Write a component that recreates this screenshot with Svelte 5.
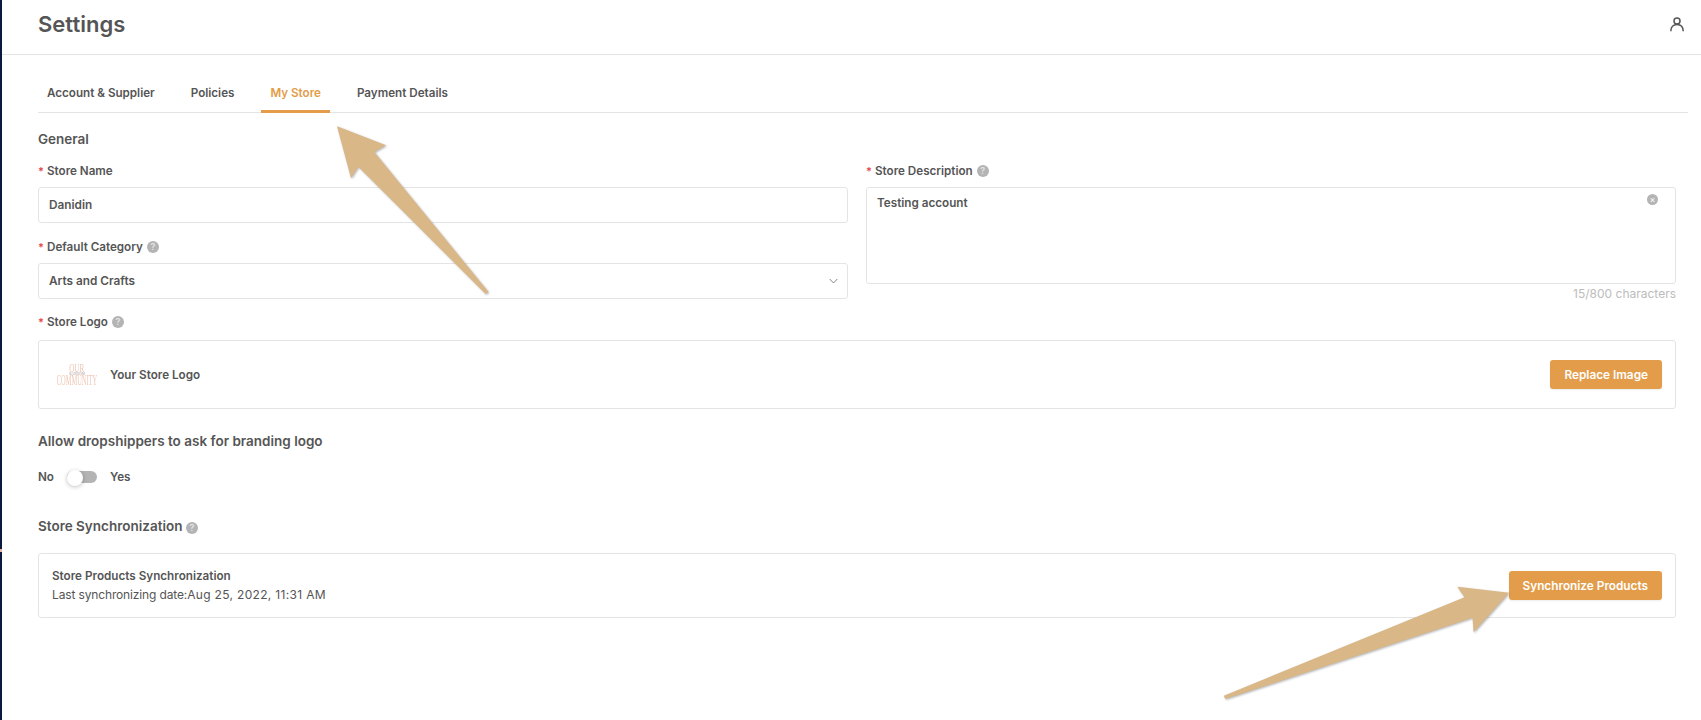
<script>
  const tabs = ['Account & Supplier', 'Policies', 'My Store', 'Payment Details'];
  const active = 'My Store';
</script>

<div class="page">
  <aside class="rail"><span class="rail-mark"></span></aside>
  <main class="main">
    <header class="top">
      <h1>Settings</h1>
      <svg class="user" viewBox="0 0 14 15" aria-hidden="true">
        <circle cx="7" cy="4" r="3" />
        <path d="M.8 14.3c0-4.2 2.5-6.8 6.2-6.8s6.2 2.6 6.2 6.8" />
      </svg>
    </header>

    <section class="content">
      <nav class="tabs">
        {#each tabs as tab}
          <span class="tab" class:active={tab === active}>{tab}</span>
        {/each}
      </nav>

      <div class="body">
        <h2 class="general">General</h2>

        <div class="grid">
          <div class="col">
            <label class="label"><i>*</i>Store Name</label>
            <div class="field">Danidin</div>
            <label class="label second"><i>*</i>Default Category <span class="help">?</span></label>
            <div class="field select">
              Arts and Crafts
              <svg viewBox="0 0 10 6" aria-hidden="true"><path d="M.8.8 5 5.2 9.2.8" /></svg>
            </div>
          </div>
          <div class="col">
            <label class="label"><i>*</i>Store Description <span class="help">?</span></label>
            <div class="area">
              Testing account
              <span class="clear">×</span>
            </div>
            <div class="count">15/800 characters</div>
          </div>
        </div>

        <label class="label logo-label"><i>*</i>Store Logo <span class="help">?</span></label>
        <div class="box logo-box">
          <div class="logo-left">
            <div class="logo">
              <span class="l1">OUR</span>
              <span class="l2">RANDOM</span>
              <span class="l3">COMMUNITY</span>
            </div>
            <span class="logo-text">Your Store Logo</span>
          </div>
          <button class="btn">Replace Image</button>
        </div>

        <h2 class="allow">Allow dropshippers to ask for branding logo</h2>
        <div class="switch-row">
          <span>No</span>
          <span class="switch"><span class="thumb"></span></span>
          <span>Yes</span>
        </div>

        <h2 class="sync-title">Store Synchronization <span class="help">?</span></h2>
        <div class="box sync-box">
          <div>
            <div class="sync-name">Store Products Synchronization</div>
            <div class="sync-date">Last synchronizing date:<span class="sync-value">Aug 25, 2022, 11:31 AM</span></div>
          </div>
          <button class="btn">Synchronize Products</button>
        </div>
      </div>
    </section>
  </main>

  <svg class="arrows" viewBox="0 0 1701 720" aria-hidden="true">
    <polygon points="337,126.3 386,145.3 374.3,152 488.3,291.7 485.7,294 358.3,166.7 351,178.3" />
    <polygon points="1509,592.7 1457.3,586.7 1464.5,597.3 1223.8,695.7 1225.3,699 1472.5,617.7 1473.6,632.3" />
  </svg>
</div>

<style>
  :global(body) {
    margin: 0;
    background: #fff;
    font-family: Inter, "Liberation Sans", sans-serif;
    color: #555;
  }
  .page {
    position: relative;
    display: flex;
    height: 720px;
    overflow: hidden;
  }
  .rail {
    position: relative;
    flex: 0 0 2px;
    background: #0b1a3c;
  }
  .rail-mark {
    position: absolute;
    top: 549px;
    left: 0;
    width: 2px;
    height: 3px;
    background: #e8b4a8;
  }
  .main { flex: 1; min-width: 0; }
  .top {
    display: flex;
    align-items: center;
    justify-content: space-between;
    box-sizing: border-box;
    height: 55px;
    padding: 0 17px 6px 36px;
    border-bottom: 1px solid #e4e4e4;
  }
  h1 {
    margin: 0;
    font-size: 22px;
    font-weight: 600;
    line-height: 26px;
    color: #555;
  }
  .user {
    width: 14px;
    height: 15px;
    fill: none;
    stroke: #555;
    stroke-width: 1.5;
  }
  .content { padding: 19px 13px 0 36px; }
  .tabs {
    display: flex;
    gap: 18px;
    height: 39px;
    box-sizing: border-box;
    border-bottom: 1px solid #e4e4e4;
  }
  .tab {
    box-sizing: border-box;
    height: 39px;
    padding: 10px 9px 0;
    font-size: 11.65px;
    font-weight: 600;
    line-height: 18px;
    color: #555;
  }
  .tab.active {
    color: #e39d4a;
    border-bottom: 3px solid #e39d4a;
  }
  .body { padding-right: 12px; }
  h2 {
    margin: 0;
    font-size: 13.5px;
    font-weight: 600;
    line-height: 20px;
    color: #555;
  }
  .general { margin-top: 16px; }
  .grid {
    display: grid;
    grid-template-columns: 810px 810px;
    gap: 18px;
    margin-top: 13px;
  }
  .label {
    display: flex;
    align-items: center;
    gap: 4px;
    height: 18px;
    font-size: 11.65px;
    font-weight: 600;
    line-height: 18px;
    color: #555;
  }
  .label i {
    font-style: normal;
    color: #e5484d;
    width: 5px;
    font-size: 11px;
  }
  .second { margin-top: 15px; }
  .field {
    display: flex;
    align-items: center;
    box-sizing: border-box;
    height: 36px;
    margin-top: 7px;
    padding: 0 10px;
    border: 1px solid #e4e4e4;
    border-radius: 3px;
    font-size: 11.8px;
    font-weight: 600;
  }
  .select { justify-content: space-between; padding-right: 9px; }
  .select svg { width: 9px; height: 6px; fill: none; stroke: #777; stroke-width: 1; }
  .area {
    position: relative;
    box-sizing: border-box;
    height: 97px;
    margin-top: 7px;
    padding: 6px 10px;
    border: 1px solid #e4e4e4;
    border-radius: 3px;
    font-size: 11.7px;
    font-weight: 600;
    line-height: 18px;
  }
  .clear {
    position: absolute;
    top: 6px;
    right: 17px;
    width: 11px;
    height: 11px;
    border-radius: 50%;
    background: #b4b4b4;
    color: #fff;
    font-size: 9px;
    font-weight: 400;
    line-height: 11px;
    text-align: center;
  }
  .count {
    margin-top: 1px;
    text-align: right;
    font-size: 12px;
    line-height: 18px;
    color: #bcbcbc;
  }
  .help {
    display: inline-block;
    width: 12px;
    height: 12px;
    border-radius: 50%;
    background: #b4b4b4;
    color: #e4e4e4;
    font-size: 9px;
    font-weight: 600;
    line-height: 12px;
    text-align: center;
  }
  .logo-label { margin-top: 10px; }
  .box {
    display: flex;
    align-items: center;
    justify-content: space-between;
    box-sizing: border-box;
    padding: 0 13px;
    border: 1px solid #e4e4e4;
    border-radius: 3px;
  }
  .logo-box { height: 69px; margin-top: 9px; padding-left: 17px; }
  .logo-left { display: flex; align-items: center; gap: 12px; }
  .logo {
    display: flex;
    flex-direction: column;
    align-items: center;
    width: 42px;
    font-family: "Liberation Serif", serif;
    color: #eec6b5;
    line-height: 1;
    white-space: nowrap;
  }
  .l1 { font-size: 13px; line-height: 10px; transform: scaleX(0.55); }
  .l2 { font-size: 3.5px; line-height: 3px; color: #a99; }
  .l3 { font-size: 14px; line-height: 10px; transform: scaleX(0.46); }
  .logo-text { font-size: 11.7px; font-weight: 600; }
  .btn {
    box-sizing: border-box;
    height: 29px;
    padding: 0 14px;
    border: 0;
    border-radius: 3px;
    background: #e39d4a;
    color: #fff;
    font: 600 11.8px/30px Inter, "Liberation Sans", sans-serif;
    box-shadow: 0 1px 2px rgba(0, 0, 0, 0.08);
  }
  .allow { margin-top: 22px; }
  .switch-row {
    display: flex;
    align-items: center;
    gap: 13px;
    height: 20px;
    margin-top: 16px;
    font-size: 11.7px;
    font-weight: 600;
  }
  .switch {
    position: relative;
    width: 30px;
    height: 12px;
    border-radius: 6px;
    background: #b4b4b4;
  }
  .thumb {
    position: absolute;
    top: -1px;
    left: 0;
    width: 16px;
    height: 16px;
    border-radius: 50%;
    background: #fff;
    box-shadow: 0 1px 4px rgba(0, 0, 0, 0.25);
  }
  .sync-title { margin-top: 29px; }
  .sync-box { height: 65px; margin-top: 17px; }
  .sync-name { font-size: 11.7px; font-weight: 600; line-height: 18px; }
  .sync-date { font-size: 12px; line-height: 20px; letter-spacing: -0.14px; }
  .sync-value { letter-spacing: 0.33px; }
  .arrows {
    position: absolute;
    inset: 0;
    width: 1701px;
    height: 720px;
    pointer-events: none;
    fill: #d9b787;
    filter: drop-shadow(1px 1px 1px rgba(90, 90, 90, 0.45));
  }
</style>
